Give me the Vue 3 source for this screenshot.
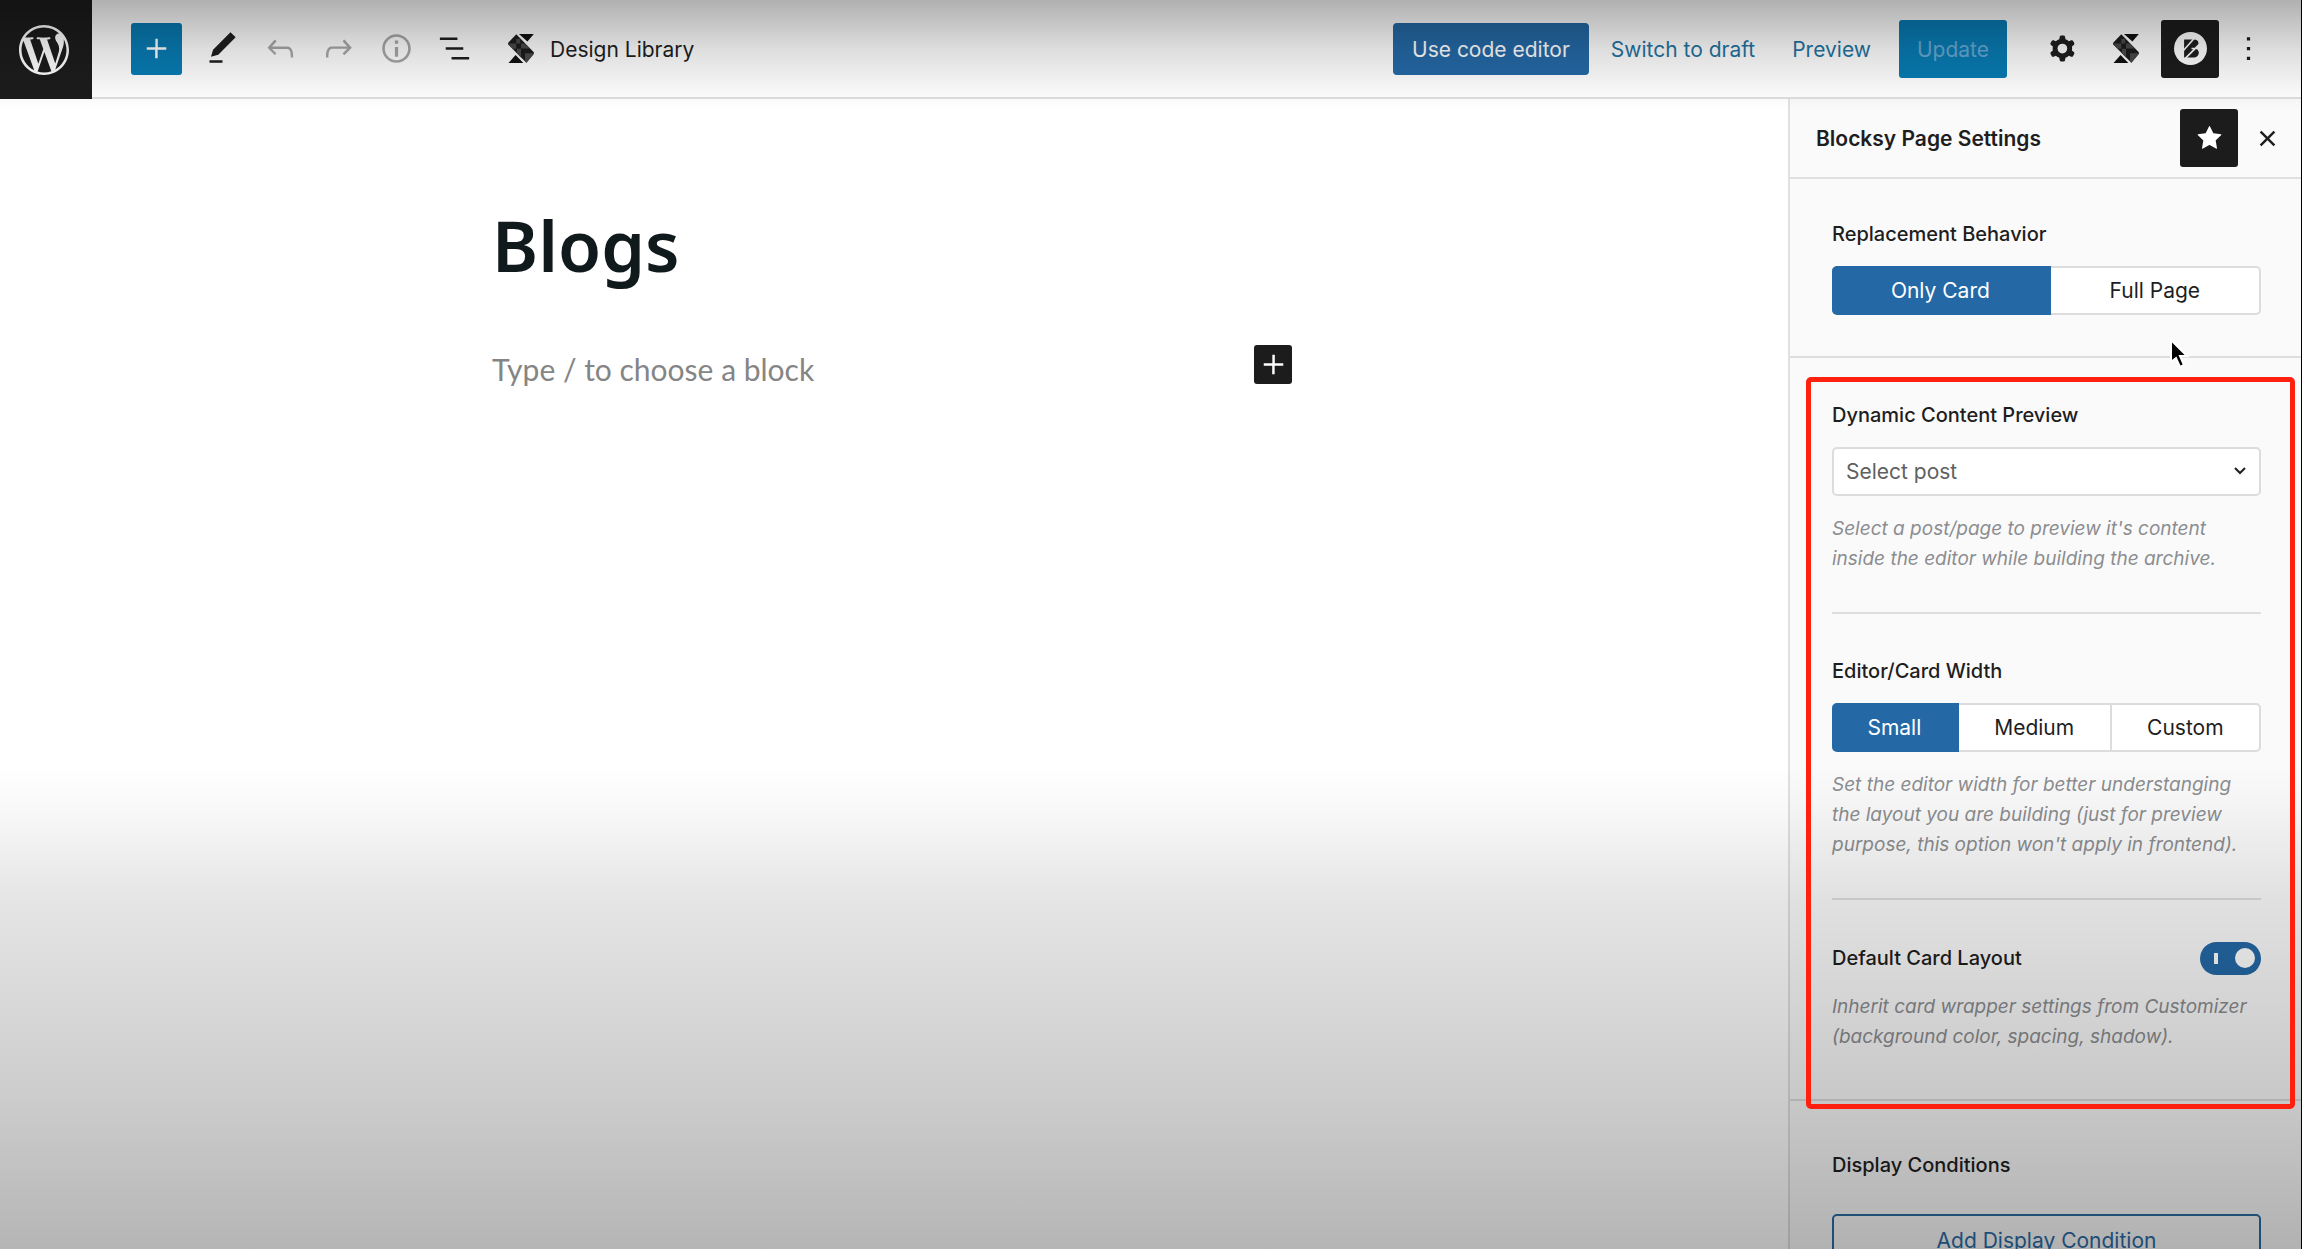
<script setup>
import { ref } from 'vue'

const icons = {
  plus: 'M18 11.2h-5.2V6h-1.5v5.2H6v1.5h5.2V18h1.5v-5.2H18z',
  edit: 'M20.1 5.1L16.9 2 6.2 12.7l-1.3 4.4 4.5-1.3L20.1 5.1zM4 20.8h8v-1.5H4v1.5z',
  undo: 'M18.3 11.7c-.6-.6-1.4-.9-2.3-.9H6.7l2.9-3.3-1.1-1-4.5 5L8.5 16l1-1-2.7-2.7H16c.5 0 .9.2 1.3.5 1 1 1 3.4 1 4.5v.3h1.5v-.2c0-1.5 0-4.3-1.5-5.7z',
  redo: 'M15.6 6.5l-1.1 1 2.9 3.3H8c-.9 0-1.7.3-2.3.9-1.4 1.5-1.4 4.2-1.4 5.6v.2h1.5v-.3c0-1.1 0-3.5 1-4.5.3-.3.7-.5 1.3-.5h9.2L14.5 15l1.1 1.1 4.6-4.6-4.6-5z',
  info: 'M12 3.2c-4.8 0-8.8 3.9-8.8 8.8 0 4.8 3.9 8.8 8.8 8.8 4.8 0 8.8-3.9 8.8-8.8 0-4.8-4-8.8-8.8-8.8zm0 16c-4 0-7.2-3.3-7.2-7.2C4.8 8 8 4.8 12 4.8s7.2 3.3 7.2 7.2c0 4-3.2 7.2-7.2 7.2zM11 17h2v-6h-2v6zm0-8h2V7h-2v2z',
  list: 'M13.8 5.2H3v1.5h10.8V5.2zm-3.6 12v1.5H21v-1.5H10.2zm7.2-6H6.6v1.5h10.8v-1.5z',
  cog: 'M10.289 4.836A1 1 0 0111.275 4h1.306a1 1 0 01.987.836l.244 1.466c.787.26 1.503.679 2.108 1.218l1.393-.522a1 1 0 011.216.437l.653 1.13a1 1 0 01-.23 1.273l-1.148.944a6.025 6.025 0 010 2.435l1.149.946a1 1 0 01.23 1.272l-.653 1.13a1 1 0 01-1.216.437l-1.394-.522c-.605.54-1.32.958-2.108 1.218l-.244 1.466a1 1 0 01-.987.836h-1.306a1 1 0 01-.986-.836l-.244-1.466a5.995 5.995 0 01-2.108-1.218l-1.394.522a1 1 0 01-1.217-.436l-.653-1.131a1 1 0 01.23-1.272l1.149-.946a6.026 6.026 0 010-2.435l-1.148-.944a1 1 0 01-.23-1.272l.653-1.131a1 1 0 011.217-.437l1.393.522a5.994 5.994 0 012.108-1.218l.244-1.466zM14.929 12a3 3 0 11-6 0 3 3 0 016 0z',
  more: 'M13 19h-2v-2h2v2zm0-6h-2v-2h2v2zm0-6h-2V5h2v2z',
  star: 'M11.776 4.454a.25.25 0 01.448 0l2.069 4.192a.25.25 0 00.188.137l4.626.672a.25.25 0 01.139.426l-3.348 3.263a.25.25 0 00-.072.222l.79 4.607a.25.25 0 01-.362.263l-4.138-2.175a.25.25 0 00-.232 0l-4.138 2.175a.25.25 0 01-.363-.263l.79-4.607a.25.25 0 00-.071-.222L4.754 9.881a.25.25 0 01.139-.426l4.626-.672a.25.25 0 00.188-.137l2.069-4.192z',
  close: 'M12 13.06l3.712 3.713 1.061-1.06L13.061 12l3.712-3.712-1.06-1.06L12 10.938 8.288 7.227l-1.061 1.06L10.939 12l-3.712 3.712 1.06 1.061L12 13.061z'
}

const tools = [
  { icon: 'edit', label: 'Tools' },
  { icon: 'undo', label: 'Undo', disabled: true },
  { icon: 'redo', label: 'Redo', disabled: true },
  { icon: 'info', label: 'Details', disabled: true },
  { icon: 'list', label: 'List View' }
]

const behavior = ref('Only Card')
const width = ref('Small')
const post = ref('')
const defaultLayout = ref(true)
</script>

<template>
  <div class="app">
    <header class="topbar">
      <a class="wp" href="#" aria-label="View Pages">
        <svg viewBox="0 0 24 24" width="50" height="50"><path d="M21.469 6.825c.84 1.537 1.318 3.3 1.318 5.175 0 3.979-2.156 7.456-5.363 9.325l3.295-9.527c.615-1.54.82-2.771.82-3.864 0-.405-.026-.78-.07-1.11m-7.981.105c.647-.03 1.232-.105 1.232-.105.582-.075.514-.93-.067-.899 0 0-1.755.135-2.88.135-1.064 0-2.85-.15-2.85-.15-.585-.03-.661.855-.075.885 0 0 .54.061 1.125.09l1.68 4.605-2.37 7.08L5.354 6.9c.649-.03 1.234-.1 1.234-.1.585-.075.516-.93-.065-.896 0 0-1.746.138-2.874.138-.2 0-.438-.008-.69-.015C4.911 3.15 8.235 1.215 12 1.215c2.809 0 5.365 1.072 7.286 2.833-.046-.003-.091-.009-.141-.009-1.06 0-1.812.923-1.812 1.914 0 .89.513 1.643 1.06 2.531.411.72.89 1.643.89 2.977 0 .915-.354 1.994-.821 3.479l-1.075 3.585-3.9-11.61.001.014zM12 22.784c-1.059 0-2.081-.153-3.048-.437l3.237-9.406 3.315 9.087c.024.053.05.101.078.149-1.12.393-2.325.609-3.582.609M1.211 12c0-1.564.336-3.05.935-4.39L7.29 21.709C3.694 19.96 1.212 16.271 1.211 12M12 0C5.385 0 0 5.385 0 12s5.385 12 12 12 12-5.385 12-12S18.615 0 12 0" /></svg>
      </a>
      <div class="tools">
        <button class="inserter" aria-label="Toggle block inserter">
          <svg class="icon" viewBox="0 0 24 24"><path :d="icons.plus" /></svg>
        </button>
        <button v-for="t in tools" :key="t.icon" class="tool" :disabled="t.disabled" :aria-label="t.label">
          <svg class="icon" viewBox="0 0 24 24"><path :d="icons[t.icon]" /></svg>
        </button>
        <button class="library">
          <svg class="stack" viewBox="0 0 76 86">
            <path d="M32 0H76L57 22Z M1 86L22 62L45 86Z" fill="#111" />
            <path d="M24 1L76 54V59L54 85L0 31V26Z" fill="#1c1c1c" />
            <path d="M24 14H36V28H24Z M0 28H24V44H14Z M38 28H49L64 43H38Z M26 44H38V70L26 58Z M50 57H76L54 85L50 80Z" fill="#4a4a4a" />
          </svg>
          <span class="caption">Design Library</span>
        </button>
      </div>
      <div class="actions">
        <button class="code caption">Use code editor</button>
        <button class="link draft caption">Switch to draft</button>
        <button class="link preview caption">Preview</button>
        <button class="update caption" disabled>Update</button>
        <div class="toggles">
          <button class="tool" aria-label="Settings">
            <svg class="icon" viewBox="0 0 24 24"><path fill-rule="evenodd" :d="icons.cog" /></svg>
          </button>
          <button class="tool" aria-label="Stackable Settings">
            <svg class="stack" viewBox="0 0 76 86">
              <path d="M32 0H76L57 22Z M1 86L22 62L45 86Z" fill="#111" />
              <path d="M24 1L76 54V59L54 85L0 31V26Z" fill="#1c1c1c" />
              <path d="M24 14H36V28H24Z M0 28H24V44H14Z M38 28H49L64 43H38Z M26 44H38V70L26 58Z M50 57H76L54 85L50 80Z" fill="#4a4a4a" />
            </svg>
          </button>
          <button class="tool dark" aria-label="Blocksy Page Settings">
            <svg width="33" height="33" viewBox="0 0 98 98">
              <circle cx="49" cy="49" r="49" fill="#fff" />
              <path d="M30 22H60Q72 22 73 34Q73 42 66 48Q74 54 74 61Q72 76 58 76H30Z" fill="#1e1e1e" />
              <path d="M61 18L26 57M76 36L30 82M52 49H80" fill="none" stroke="#fff" stroke-width="5" />
            </svg>
          </button>
          <button class="more" aria-label="Options">
            <svg class="icon" viewBox="0 0 24 24"><path :d="icons.more" /></svg>
          </button>
        </div>
      </div>
    </header>

    <div class="body">
      <main class="canvas">
        <article class="post">
          <h1>Blogs</h1>
          <div class="block">
            <p>Type / to choose a block</p>
            <button class="add" aria-label="Add block">
              <svg class="icon" viewBox="0 0 24 24"><path :d="icons.plus" /></svg>
            </button>
          </div>
        </article>
      </main>

      <aside class="panel">
        <div class="panel-head">
          <h2 class="caption">Blocksy Page Settings</h2>
          <button class="tool dark" aria-label="Unpin from toolbar">
            <svg class="icon" viewBox="0 0 24 24"><path :d="icons.star" /></svg>
          </button>
          <button class="close" aria-label="Close plugin">
            <svg class="icon" viewBox="0 0 24 24"><path :d="icons.close" /></svg>
          </button>
        </div>

        <section class="section replacement">
          <fieldset class="field">
            <legend class="label">Replacement Behavior</legend>
            <div class="segments">
              <label v-for="o in ['Only Card', 'Full Page']" :key="o" :class="{ on: behavior === o }">
                <input v-model="behavior" type="radio" name="behavior" :value="o" />{{ o }}
              </label>
            </div>
          </fieldset>
          <svg class="cursor" viewBox="0 0 20 32" width="20" height="32">
            <path d="M2 2V24L7 20L11 29L15 27L11 18H18Z" fill="#000" stroke="#fff" stroke-width="2" />
          </svg>
        </section>

        <section class="section group">
          <div class="field">
            <label class="label" for="post">Dynamic Content Preview</label>
            <div class="select">
              <select id="post" v-model="post">
                <option value="">Select post</option>
              </select>
              <svg viewBox="0 0 12 8" width="12" height="8"><path d="M1 1L6 6L11 1" fill="none" stroke="#1e1e1e" stroke-width="2" /></svg>
            </div>
            <p class="help">Select a post/page to preview it's content inside the editor while building the archive.</p>
          </div>
          <fieldset class="field">
            <legend class="label">Editor/Card Width</legend>
            <div class="segments">
              <label v-for="o in ['Small', 'Medium', 'Custom']" :key="o" :class="{ on: width === o }">
                <input v-model="width" type="radio" name="width" :value="o" />{{ o }}
              </label>
            </div>
            <p class="help">Set the editor width for better understanging the layout you are building (just for preview purpose, this option won't apply in frontend).</p>
          </fieldset>
          <div class="field">
            <div class="row">
              <label class="label" for="layout">Default Card Layout</label>
              <input id="layout" v-model="defaultLayout" class="switch" type="checkbox" />
            </div>
            <p class="help">Inherit card wrapper settings from Customizer (background color, spacing, shadow).</p>
          </div>
          <div class="highlight"></div>
        </section>

        <section class="section conditions">
          <h3 class="label">Display Conditions</h3>
          <button class="condition">Add Display Condition</button>
        </section>
      </aside>
    </div>
    <div class="shade"></div>
  </div>
</template>

<style>
body { margin: 0; }
</style>

<style scoped>
* { box-sizing: border-box; }
.app {
  position: relative;
  display: flex;
  flex-direction: column;
  height: 100vh;
  overflow: hidden;
  border-right: 1px solid #000;
  background: #fff;
  color: #1e1e1e;
  font-family: Inter, "Liberation Sans", sans-serif;
  font-size: 21px;
}
button {
  display: flex;
  align-items: center;
  justify-content: center;
  padding: 0;
  border: 0;
  border-radius: 3px;
  background: none;
  color: inherit;
  font: inherit;
  white-space: nowrap;
}
svg { display: block; flex: none; }
.icon { width: 39px; height: 39px; fill: currentColor; }
.stack { width: 26px; height: 29px; }
h1, h2, h3, p { margin: 0; }
.caption { padding-top: 2px; }

.topbar {
  display: flex;
  align-items: center;
  flex: none;
  height: 99px;
  border-bottom: 2px solid #dedede;
}
.wp {
  display: flex;
  align-items: center;
  justify-content: center;
  width: 92px;
  height: 99px;
  margin-bottom: -2px;
  padding-right: 4px;
  background: #1c1c1c;
}
.wp svg { fill: #fff; }
.tools { display: flex; align-items: center; margin-left: 39px; }
.inserter { width: 51px; height: 52px; margin-right: 11px; background: #087bb3; color: #fff; }
.tool { width: 58px; height: 58px; }
.tool:disabled { color: #a8a8a8; }
.dark { background: #1c1c1c; color: #fff; }
.library { gap: 16px; margin-left: 25px; }
.actions { display: flex; align-items: center; margin-left: auto; padding-right: 30px; }
.code { height: 52px; padding-left: 19px; padding-right: 19px; border-radius: 4px; background: #2469a6; color: #fff; }
.link { color: #1f74a3; }
.draft { margin-left: 22px; }
.preview { margin-left: 37px; }
.update { height: 58px; margin-left: 28px; padding-left: 18px; padding-right: 18px; background: #087bb3; color: #66a9d2; }
.toggles { display: flex; align-items: center; gap: 6px; margin-left: 26px; }
.more { width: 46px; height: 58px; }

.body { display: flex; flex: 1; min-height: 0; }
.canvas { flex: 1; min-width: 0; padding: 0 40px; }
.post { max-width: 804px; margin: 0 auto; padding-top: 98px; }
h1 {
  color: #10191c;
  font-family: "Noto Sans", sans-serif;
  font-size: 70px;
  line-height: 96px;
  font-weight: 600;
}
.block {
  display: flex;
  align-items: flex-start;
  justify-content: space-between;
  margin-top: 52px;
  padding-right: 4px;
}
.block p { color: #858585; font-family: Lato, sans-serif; font-size: 30px; line-height: 48px; }
.add { width: 38px; height: 39px; background: #1c1c1c; color: #fff; }

.panel {
  flex: none;
  width: 513px;
  overflow: hidden;
  border-left: 2px solid #e0e0e0;
  background: #fafafa;
}
.panel-head {
  display: flex;
  align-items: center;
  height: 80px;
  padding: 0 14px 0 26px;
  border-bottom: 2px solid #e0e0e0;
}
h2 { flex: 1; font-size: 21px; line-height: 30px; font-weight: 600; }
.close { width: 40px; height: 40px; margin-left: 9px; }
.section { position: relative; padding: 0 40px 0 42px; border-bottom: 2px solid #dedede; }
.field { min-width: 0; margin: 0; padding: 42px 0 38px; border: 0; }
.replacement .field { padding: 40px 0 41px; }
.field + .field { border-top: 2px solid #dedede; }
.label { display: block; padding: 0; font-size: 20px; line-height: 30px; font-weight: 500; }
fieldset .label { float: left; width: 100%; margin-bottom: 17px; }
.segments { display: flex; clear: both; height: 49px; }
.segments label {
  display: flex;
  flex: 1 1 auto;
  align-items: center;
  justify-content: center;
  border: 2px solid #dcdcdc;
  border-left-width: 0;
  background: #fff;
}
.segments label:first-child { border-radius: 5px 0 0 5px; }
.segments label:last-child { border-radius: 0 5px 5px 0; }
.segments .on { border-color: #2469a6; background: #2469a6; color: #fff; }
.segments input { position: absolute; opacity: 0; }
.select { position: relative; margin-top: 17px; }
select {
  display: block;
  width: 100%;
  height: 49px;
  padding: 0 40px 0 12px;
  appearance: none;
  border: 2px solid #dcdcdc;
  border-radius: 5px;
  background: #fff;
  color: #606060;
  font: inherit;
}
.select svg { position: absolute; top: 20px; right: 15px; pointer-events: none; }
.help { margin-top: 18px; color: #8b8d90; font-size: 19px; line-height: 30px; font-style: italic; }
.row { display: flex; align-items: center; justify-content: space-between; height: 32px; }
.switch {
  position: relative;
  width: 61px;
  height: 33px;
  margin: 0;
  appearance: none;
  border-radius: 17px;
  background: #2469a6;
}
.switch::before {
  content: "";
  position: absolute;
  top: 11px;
  left: 14px;
  width: 4px;
  height: 11px;
  background: #fff;
}
.switch::after {
  content: "";
  position: absolute;
  top: 6px;
  right: 6px;
  width: 20px;
  height: 20px;
  border-radius: 50%;
  background: #fff;
}
.group { padding-bottom: 9px; }
.conditions { padding-top: 49px; }
.condition {
  width: 100%;
  height: 52px;
  margin-top: 34px;
  border: 2px solid #2a6ba5;
  border-radius: 5px;
  color: #2a6ba5;
}
.highlight {
  position: absolute;
  z-index: 3;
  top: 19px;
  right: 6px;
  bottom: -10px;
  left: 16px;
  border: 5px solid #ff2010;
  border-radius: 5px;
  pointer-events: none;
}
.cursor { position: absolute; right: 112px; bottom: -14px; }
.shade {
  position: absolute;
  z-index: 2;
  inset: 0;
  background:
    linear-gradient(rgba(0, 0, 0, 0.31), rgba(0, 0, 0, 0.13) 50px, rgba(0, 0, 0, 0.03) 92px, transparent 110px),
    linear-gradient(transparent 61%, rgba(0, 0, 0, 0.02) 64%, rgba(0, 0, 0, 0.1) 72%, rgba(0, 0, 0, 0.2) 88%, rgba(0, 0, 0, 0.29));
  pointer-events: none;
}
</style>
